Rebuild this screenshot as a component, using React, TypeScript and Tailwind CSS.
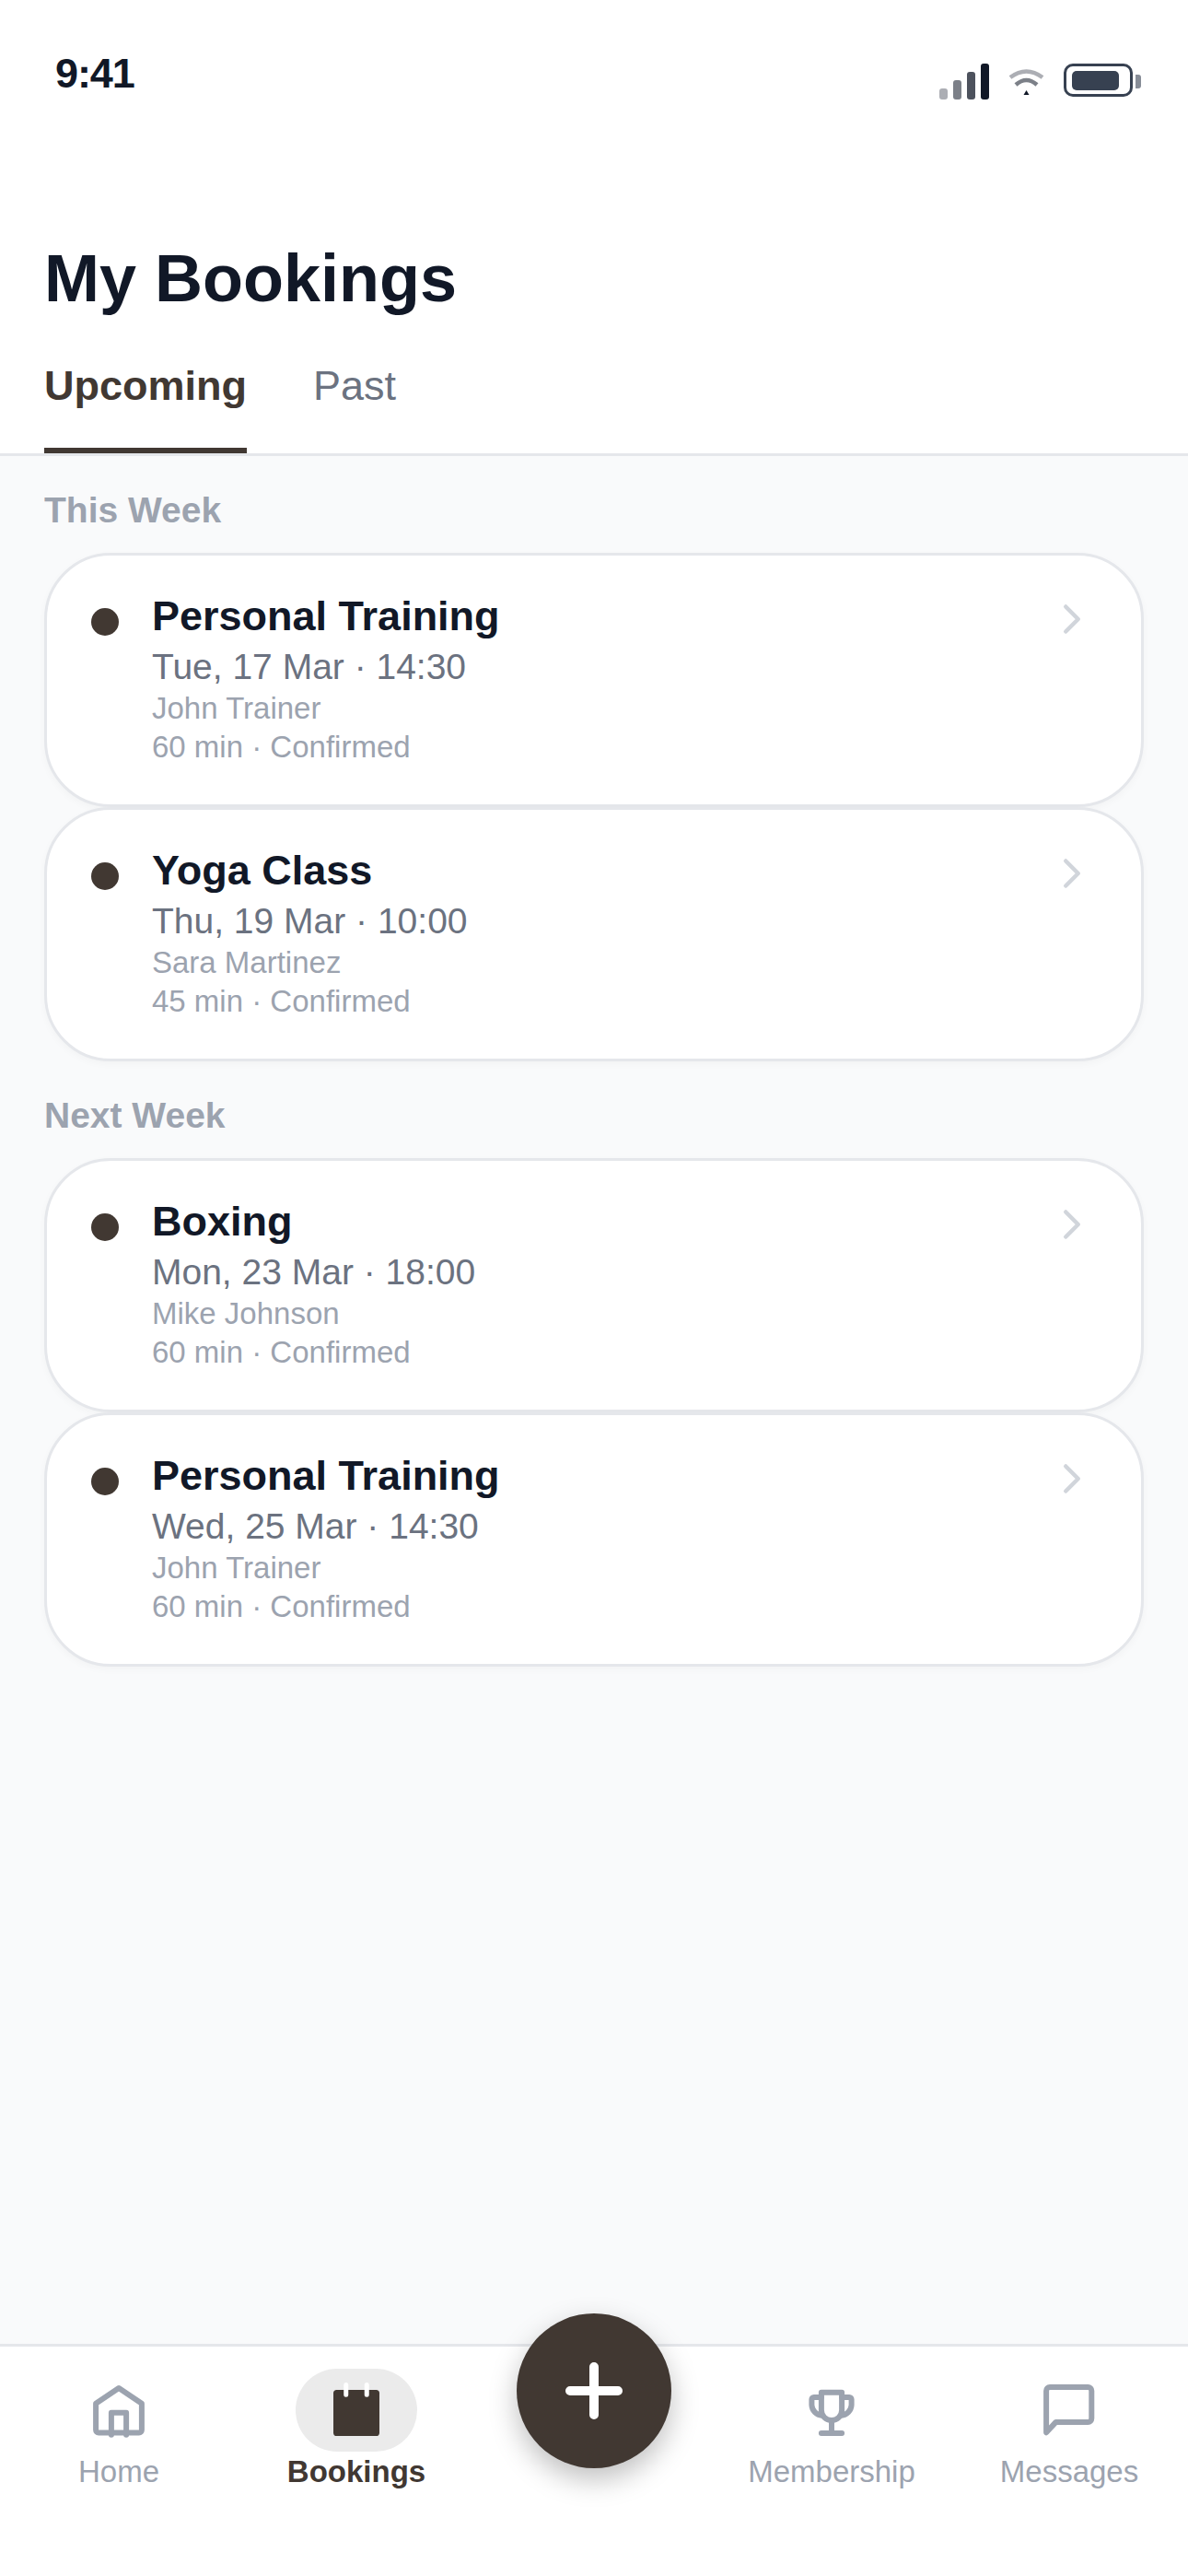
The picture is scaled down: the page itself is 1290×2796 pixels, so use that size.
import { ChevronRight } from "lucide-react";

const font = "font-['Liberation_Sans',Arial,sans-serif]";

const thisWeek = [
  { title: "Personal Training", date: "Tue, 17 Mar · 14:30", who: "John Trainer", meta: "60 min · Confirmed" },
  { title: "Yoga Class", date: "Thu, 19 Mar · 10:00", who: "Sara Martinez", meta: "45 min · Confirmed" },
];

const nextWeek = [
  { title: "Boxing", date: "Mon, 23 Mar · 18:00", who: "Mike Johnson", meta: "60 min · Confirmed" },
  { title: "Personal Training", date: "Wed, 25 Mar · 14:30", who: "John Trainer", meta: "60 min · Confirmed" },
];

type Booking = (typeof thisWeek)[number];

function BookingCard({ item }: { item: Booking }) {
  return (
    <div className="flex items-start rounded-[72px] border-[3px] border-[#e5e7eb] bg-white pt-[42px] pr-[48px] pb-[44px] pl-[48px] shadow-[0_3px_9px_rgba(0,0,0,0.03)]">
      <span className="mt-[15px] h-[30px] w-[30px] shrink-0 rounded-full bg-[#413832]" />
      <div className="ml-[36px] flex-1">
        <p className="text-[45px] leading-[48px] font-bold text-[#111827]">{item.title}</p>
        <p className="mt-[7px] text-[39px] leading-[48px] text-[#6b7280]">{item.date}</p>
        <p className="mt-[3px] text-[33px] leading-[36px] text-[#9ca3af]">{item.who}</p>
        <p className="mt-[6px] text-[33px] leading-[36px] text-[#9ca3af]">{item.meta}</p>
      </div>
      <ChevronRight size={54} strokeWidth={2} className="shrink-0 text-[#d1d5db]" />
    </div>
  );
}

function StatusIcons() {
  return (
    <div className="mt-[16px] flex items-start">
      <div className="flex h-[39px] items-end gap-[6px]">
        <span className="h-[12px] w-[9px] rounded-[3px] bg-[#111827]/35" />
        <span className="h-[21px] w-[9px] rounded-[3px] bg-[#111827]/55" />
        <span className="h-[30px] w-[9px] rounded-[3px] bg-[#111827]/75" />
        <span className="h-[39px] w-[9px] rounded-[3px] bg-[#111827]" />
      </div>
      <svg width="39" height="30" viewBox="0 0 39 30" className="mt-[5px] ml-[21px]" fill="none">
        <path d="M2 10 Q19.5 -3 37 10" stroke="#111827" strokeOpacity="0.35" strokeWidth="4.5" />
        <path d="M8 18 Q19.5 8 31 18" stroke="#111827" strokeOpacity="0.55" strokeWidth="4.5" />
        <path d="M19.5 24 L22.5 29 H16.5 Z" fill="#111827" />
      </svg>
      <div className="ml-[21px] flex h-[36px] w-[75px] items-center rounded-[10px] border-[3px] border-[#374151] pl-[6px]">
        <span className="h-[21px] w-[51px] rounded-[5px] bg-[#374151]" />
      </div>
      <span className="mt-[12px] ml-[3px] h-[15px] w-[6px] rounded-r-[3px] bg-[#374151]/60" />
    </div>
  );
}

function NavItem({ label, active, children }: { label: string; active?: boolean; children: React.ReactNode }) {
  return (
    <div className="flex flex-col items-center">
      <div className={active ? "flex h-[90px] w-[132px] items-center justify-center rounded-full bg-[#ebebeb]" : "flex h-[90px] w-[132px] items-center justify-center"}>
        {children}
      </div>
      <span className={active ? "mt-[4px] text-[33px] leading-[36px] font-bold text-[#413832]" : "mt-[4px] text-[33px] leading-[36px] text-[#9ca3af]"}>
        {label}
      </span>
    </div>
  );
}

export default function App() {
  return (
    <div className={`${font} flex h-[2796px] w-[1290px] flex-col overflow-hidden bg-[#f9fafb]`}>
      <header className="border-b-[3px] border-[#e5e7eb] bg-white">
        <div className="flex h-[132px] items-start justify-between pt-[53px] pr-[51px] pl-[60px]">
          <span className="text-[45px] leading-[54px] font-bold tracking-tight text-[#111827]">9:41</span>
          <StatusIcons />
        </div>
        <div className="px-[48px] pt-[128px]">
          <h1 className="text-[72px] leading-[84px] font-bold text-[#111827]">My Bookings</h1>
          <div className="mt-[48px] flex gap-[72px]">
            <span className="border-b-[6px] border-[#413832] pb-[40px] text-[45px] leading-[54px] font-bold text-[#413832]">Upcoming</span>
            <span className="pb-[46px] text-[45px] leading-[54px] text-[#6b7280]">Past</span>
          </div>
        </div>
      </header>

      <main className="flex-1 px-[48px] pt-[36px]">
        <h2 className="mb-[24px] text-[39px] leading-[45px] font-bold text-[#9ca3af]">This Week</h2>
        {thisWeek.map((item) => (
          <BookingCard key={item.date} item={item} />
        ))}
        <h2 className="mt-[36px] mb-[24px] text-[39px] leading-[45px] font-bold text-[#9ca3af]">Next Week</h2>
        {nextWeek.map((item) => (
          <BookingCard key={item.date} item={item} />
        ))}
      </main>

      <nav className="relative grid h-[252px] grid-cols-5 border-t-[3px] border-[#e5e7eb] bg-white pt-[24px]">
        <NavItem label="Home">
          <svg width="72" height="72" viewBox="0 0 24 24" fill="none" stroke="#9ca3af" strokeWidth="2" strokeLinecap="round" strokeLinejoin="round">
            <path d="M3.7 9.6 12 4l8.3 5.6v9.6a1 1 0 0 1-1 1H4.7a1 1 0 0 1-1-1z" />
            <path d="M9.3 20.9v-8h5.4v8" />
          </svg>
        </NavItem>
        <NavItem label="Bookings" active>
          <svg width="72" height="72" viewBox="0 0 24 24" fill="none">
            <rect x="3.67" y="4.67" width="16.66" height="16.66" rx="1.2" fill="#413832" />
            <path d="M8.25 2.8v3.6M15.75 2.8v3.6" stroke="white" strokeWidth="1.67" strokeLinecap="round" />
          </svg>
        </NavItem>
        <div />
        <NavItem label="Membership">
          <svg width="72" height="72" viewBox="0 0 24 24" fill="none" stroke="#9ca3af" strokeWidth="2" strokeLinecap="round" strokeLinejoin="round">
            <path d="M8.3 5.6h7.4v6.4a3.7 3.7 0 0 1-7.4 0z" />
            <path d="M8.3 7.3H5.6a.8.8 0 0 0-.8.8v2a4 4 0 0 0 3.7 3.8M15.7 7.3h2.7a.8.8 0 0 1 .8.8v2a4 4 0 0 1-3.7 3.8" />
            <path d="M12 15.7v4.4M8.3 20.3h7.4" />
          </svg>
        </NavItem>
        <NavItem label="Messages">
          <svg width="72" height="72" viewBox="0 0 24 24" fill="none" stroke="#9ca3af" strokeWidth="2" strokeLinecap="round" strokeLinejoin="round">
            <path d="M20.1 15a1.3 1.3 0 0 1-1.3 1.3H7.2L3.7 20.1V5a1.3 1.3 0 0 1 1.3-1.3h13.8a1.3 1.3 0 0 1 1.3 1.3z" />
          </svg>
        </NavItem>
        <button className="absolute top-[-36px] left-[561px] flex h-[168px] w-[168px] items-center justify-center rounded-full bg-[#413832] shadow-[0_12px_30px_rgba(0,0,0,0.25)]">
          <svg width="72" height="72" viewBox="0 0 72 72" fill="none" stroke="white" strokeWidth="10" strokeLinecap="round">
            <path d="M36 10v52M10 36h52" />
          </svg>
        </button>
      </nav>
    </div>
  );
}
